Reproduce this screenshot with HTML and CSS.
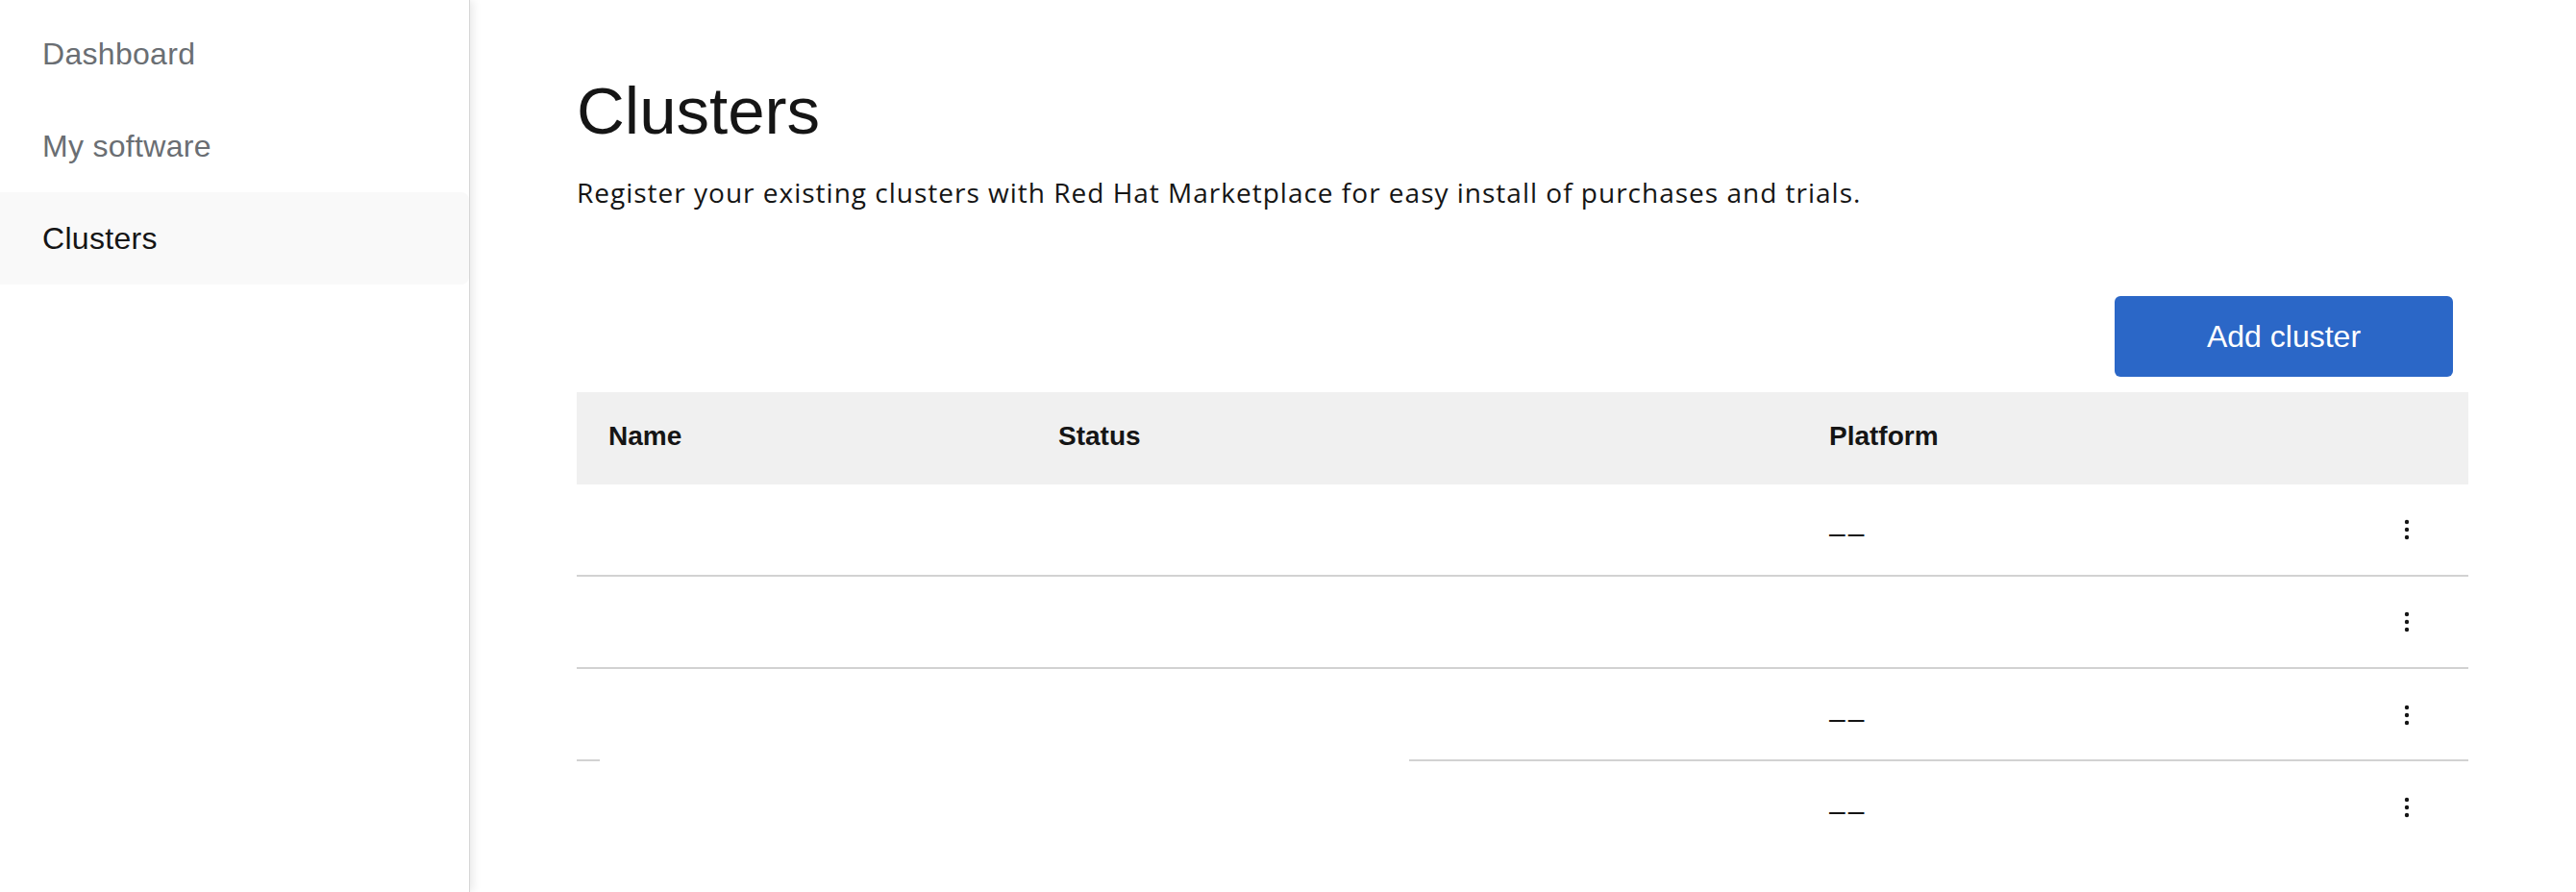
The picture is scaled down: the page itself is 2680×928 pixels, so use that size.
FILE: index.html
```html
<!DOCTYPE html>
<html lang="en">
<head>
<meta charset="utf-8">
<title>Clusters</title>
<link rel="stylesheet" href="styles.css">
</head>
<body>
<div class="app">
  <aside class="sidebar">
    <nav class="nav">
      <a class="nav-item">Dashboard</a>
      <a class="nav-item">My software</a>
      <a class="nav-item active">Clusters</a>
    </nav>
  </aside>
  <main class="main">
    <h1 class="title">Clusters</h1>
    <p class="subtitle">Register your existing clusters with Red Hat Marketplace for easy install of purchases and trials.</p>
    <div class="toolbar">
      <button class="btn-primary" type="button">Add cluster</button>
    </div>
    <div class="table">
      <div class="row head">
        <div class="cell">Name</div>
        <div class="cell">Status</div>
        <div class="cell">Platform</div>
        <div class="cell"></div>
      </div>
      <div class="row">
        <div class="cell"></div>
        <div class="cell"></div>
        <div class="cell"><span class="dash">––</span></div>
        <div class="cell kebab"><svg width="6" height="22" viewBox="0 0 6 22"><circle cx="3" cy="3" r="2.2"/><circle cx="3" cy="11" r="2.2"/><circle cx="3" cy="19" r="2.2"/></svg></div>
      </div>
      <div class="row">
        <div class="cell"></div>
        <div class="cell"></div>
        <div class="cell"></div>
        <div class="cell kebab"><svg width="6" height="22" viewBox="0 0 6 22"><circle cx="3" cy="3" r="2.2"/><circle cx="3" cy="11" r="2.2"/><circle cx="3" cy="19" r="2.2"/></svg></div>
      </div>
      <div class="row split">
        <div class="cell"></div>
        <div class="cell"></div>
        <div class="cell"><span class="dash">––</span></div>
        <div class="cell kebab"><svg width="6" height="22" viewBox="0 0 6 22"><circle cx="3" cy="3" r="2.2"/><circle cx="3" cy="11" r="2.2"/><circle cx="3" cy="19" r="2.2"/></svg></div>
      </div>
      <div class="row last">
        <div class="cell"></div>
        <div class="cell"></div>
        <div class="cell"><span class="dash">––</span></div>
        <div class="cell kebab"><svg width="6" height="22" viewBox="0 0 6 22"><circle cx="3" cy="3" r="2.2"/><circle cx="3" cy="11" r="2.2"/><circle cx="3" cy="19" r="2.2"/></svg></div>
      </div>
    </div>
  </main>
</div>
</body>
</html>
```

FILE: styles.css
```css
* { box-sizing: border-box; }
html, body {
  margin: 0;
  padding: 0;
  background: #ffffff;
  font-family: "Liberation Sans", Arial, sans-serif;
  color: #151515;
}
.app {
  display: flex;
  height: 928px;
  overflow: hidden;
}
.sidebar {
  width: 489px;
  flex: none;
  background: #ffffff;
  border-right: 1px solid #d6d6d6;
  box-shadow: 3px 0 9px rgba(0, 0, 0, 0.09);
  position: relative;
  z-index: 1;
}
.nav {
  display: flex;
  flex-direction: column;
  padding-top: 8px;
}
.nav-item {
  display: flex;
  align-items: center;
  height: 96px;
  padding-left: 44px;
  font-size: 32px;
  letter-spacing: 0.3px;
  color: #6a6e73;
  text-decoration: none;
  border-radius: 0 8px 8px 0;
}
.nav-item.active {
  background: #f9f9f9;
  color: #151515;
}
.main {
  flex: 1;
  padding: 76px 112px 0 111px;
  background: #ffffff;
}
.title {
  margin: 0;
  font-size: 69px;
  line-height: 80px;
  font-weight: 400;
  color: #151515;
}
.subtitle {
  margin: 24px 0 0 0;
  font-family: "Open Sans", "Liberation Sans", sans-serif;
  font-size: 28px;
  letter-spacing: 1px;
  line-height: 40px;
  color: #151515;
}
.toolbar {
  display: flex;
  justify-content: flex-end;
  padding-right: 16px;
  margin-top: 88px;
}
.btn-primary {
  width: 352px;
  height: 84px;
  border: none;
  border-radius: 6px;
  background: #2b67c7;
  color: #ffffff;
  font-family: "Liberation Sans", Arial, sans-serif;
  font-size: 32px;
  font-weight: 400;
}
.table {
  margin-top: 16px;
}
.row {
  display: grid;
  grid-template-columns: 468px 802px 1fr 128px;
  height: 96px;
  border-bottom: 2px solid #d2d2d2;
}
.row.head {
  background: #f0f0f0;
  border-bottom: none;
  font-size: 28px;
  font-weight: 700;
}
.row.head .cell {
  padding-bottom: 4px;
}
.row.split {
  border-bottom: none;
  background: linear-gradient(to right, #d2d2d2 24px, transparent 24px, transparent 866px, #d2d2d2 866px) left bottom / 100% 2px no-repeat;
}
.row.last {
  border-bottom: none;
}
.cell {
  display: flex;
  align-items: center;
  padding-left: 33px;
}
.dash {
  font-size: 30px;
  letter-spacing: 3px;
  padding-top: 8px;
  color: #151515;
}
.kebab {
  padding-left: 0;
  justify-content: center;
}
.kebab svg {
  fill: #151515;
}
```
